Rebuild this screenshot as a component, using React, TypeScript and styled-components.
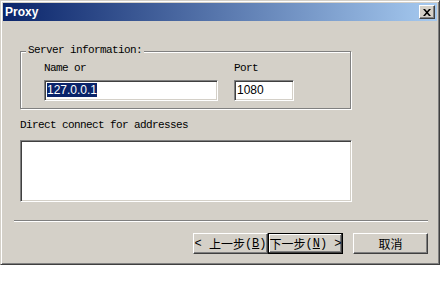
import React from "react";
import styled, { createGlobalStyle } from "styled-components";

const Global = createGlobalStyle`
  body {
    margin: 0;
    background: #ffffff;
  }
`;
const Window = styled.div`
  box-sizing: border-box;
  width: 440px;
  height: 265px;
  padding: 2px;
  background-color: #d4d0c8;
  border: 1px solid;
  border-color: #d4d0c8 #404040 #404040 #d4d0c8;
  box-shadow: inset 1px 1px 0 #ffffff, inset -1px -1px 0 #808080;
`;
const TitleBar = styled.div`
  display: flex;
  justify-content: space-between;
  align-items: center;
  height: 18px;
  padding: 0 2px;
  background: linear-gradient(to right, #0a246a, #a6caf0);
`;
const Title = styled.span`
  color: #ffffff;
  font-family: "Liberation Sans", Arial, sans-serif;
  font-weight: bold;
  font-size: 12px;
  line-height: 18px;
`;
const CloseButton = styled.div`
  box-sizing: border-box;
  display: flex;
  justify-content: center;
  align-items: center;
  width: 16px;
  height: 14px;
  background-color: #d4d0c8;
  border: 1px solid;
  border-color: #ffffff #404040 #404040 #ffffff;
  box-shadow: inset -1px -1px 0 #808080;
`;
const Content = styled.div`
  padding: 0 9px 0 11px;
`;
const Upper = styled.div`
  padding: 30px 0 0 6px;
`;
const GroupBox = styled.div`
  position: relative;
  box-sizing: border-box;
  width: 331px;
  height: 58px;
  border: 1px solid #808080;
  box-shadow: inset 1px 1px 0 #ffffff, 1px 1px 0 #ffffff;
`;
const Legend = styled.span`
  position: absolute;
  top: -8px;
  left: 5px;
  padding: 0 2px;
  background-color: #d4d0c8;
`;
const Text = styled.span`
  display: block;
  color: #000000;
  font-family: "Liberation Mono", "Courier New", monospace;
  font-size: 11px;
  letter-spacing: -0.6px;
  line-height: 12px;
  white-space: pre;
`;
const FieldGrid = styled.div`
  display: grid;
  grid-template-columns: 174px 60px;
  column-gap: 16px;
  row-gap: 6px;
  padding: 10px 0 0 23px;
`;
const Sunken = styled.div<{ $w?: number; $h: number }>`
  box-sizing: border-box;
  width: ${(p) => (p.$w ? `${p.$w}px` : "auto")};
  height: ${(p) => p.$h}px;
  padding: 1px 2px;
  background-color: #ffffff;
  border: 1px solid;
  border-color: #808080 #ffffff #ffffff #808080;
  box-shadow: inset 1px 1px 0 #404040, inset -1px -1px 0 #d4d0c8;
  color: #000000;
  font-family: "Liberation Sans", Arial, sans-serif;
  font-size: 12px;
  line-height: 17px;
`;
const Selected = styled.span`
  background-color: #0a246a;
  color: #ffffff;
`;
const DirectLabel = styled.div`
  margin-top: 10px;
`;
const AddressBox = styled.div`
  margin-top: 9px;
`;
const Separator = styled.div`
  margin-top: 18px;
  height: 0;
  border-top: 1px solid #808080;
  border-bottom: 1px solid #ffffff;
`;
const ButtonRow = styled.div`
  display: flex;
  justify-content: flex-end;
  margin-top: 11px;
`;
const Button = styled.div<{ $default?: boolean; $gap?: number }>`
  box-sizing: border-box;
  display: flex;
  justify-content: center;
  align-items: center;
  width: 75px;
  height: 21px;
  margin-left: ${(p) => p.$gap || 0}px;
  background-color: #d4d0c8;
  border: 1px solid;
  border-color: ${(p) => (p.$default ? "#000000" : "#ffffff #404040 #404040 #ffffff")};
  box-shadow: ${(p) =>
    p.$default
      ? "inset -1px -1px 0 #404040, inset 1px 1px 0 #ffffff, inset -2px -2px 0 #808080"
      : "inset -1px -1px 0 #808080"};
  color: #000000;
  font-family: "Liberation Mono", "Noto Sans CJK SC", monospace;
  font-size: 12px;
  white-space: pre;
`;
const Cjk = styled.span`
  font-family: "Noto Sans CJK SC", sans-serif;
  font-size: 12px;
`;

const CloseIcon = () => (
  <svg width="8" height="7" viewBox="0 0 8 7">
    <path d="M0 0h2l2 2.3 2-2.3h2l-3 3.5 3 3.5h-2l-2-2.3-2 2.3h-2l3-3.5z" fill="#000" />
  </svg>
);

const App = () => {
  return (
    <>
      <Global />
      <Window>
        <TitleBar>
          <Title>Proxy</Title>
          <CloseButton>
            <CloseIcon />
          </CloseButton>
        </TitleBar>
        <Content>
          <Upper>
            <GroupBox>
              <Legend>
                <Text>Server information:</Text>
              </Legend>
              <FieldGrid>
                <Text>Name or</Text>
                <Text>Port</Text>
                <Sunken $h={21}>
                  <Selected>127.0.0.1</Selected>
                </Sunken>
                <Sunken $h={21}>1080</Sunken>
              </FieldGrid>
            </GroupBox>
            <DirectLabel>
              <Text>Direct connect for addresses</Text>
            </DirectLabel>
            <AddressBox>
              <Sunken $w={332} $h={62} />
            </AddressBox>
          </Upper>
          <Separator />
          <ButtonRow>
            <Button>
              {"< "}
              <Cjk>上一步</Cjk>(<u>B</u>)
            </Button>
            <Button $default>
              <Cjk>下一步</Cjk>(<u>N</u>){" >"}
            </Button>
            <Button $gap={10}>
              <Cjk>取消</Cjk>
            </Button>
          </ButtonRow>
        </Content>
      </Window>
    </>
  );
};

export default App;
